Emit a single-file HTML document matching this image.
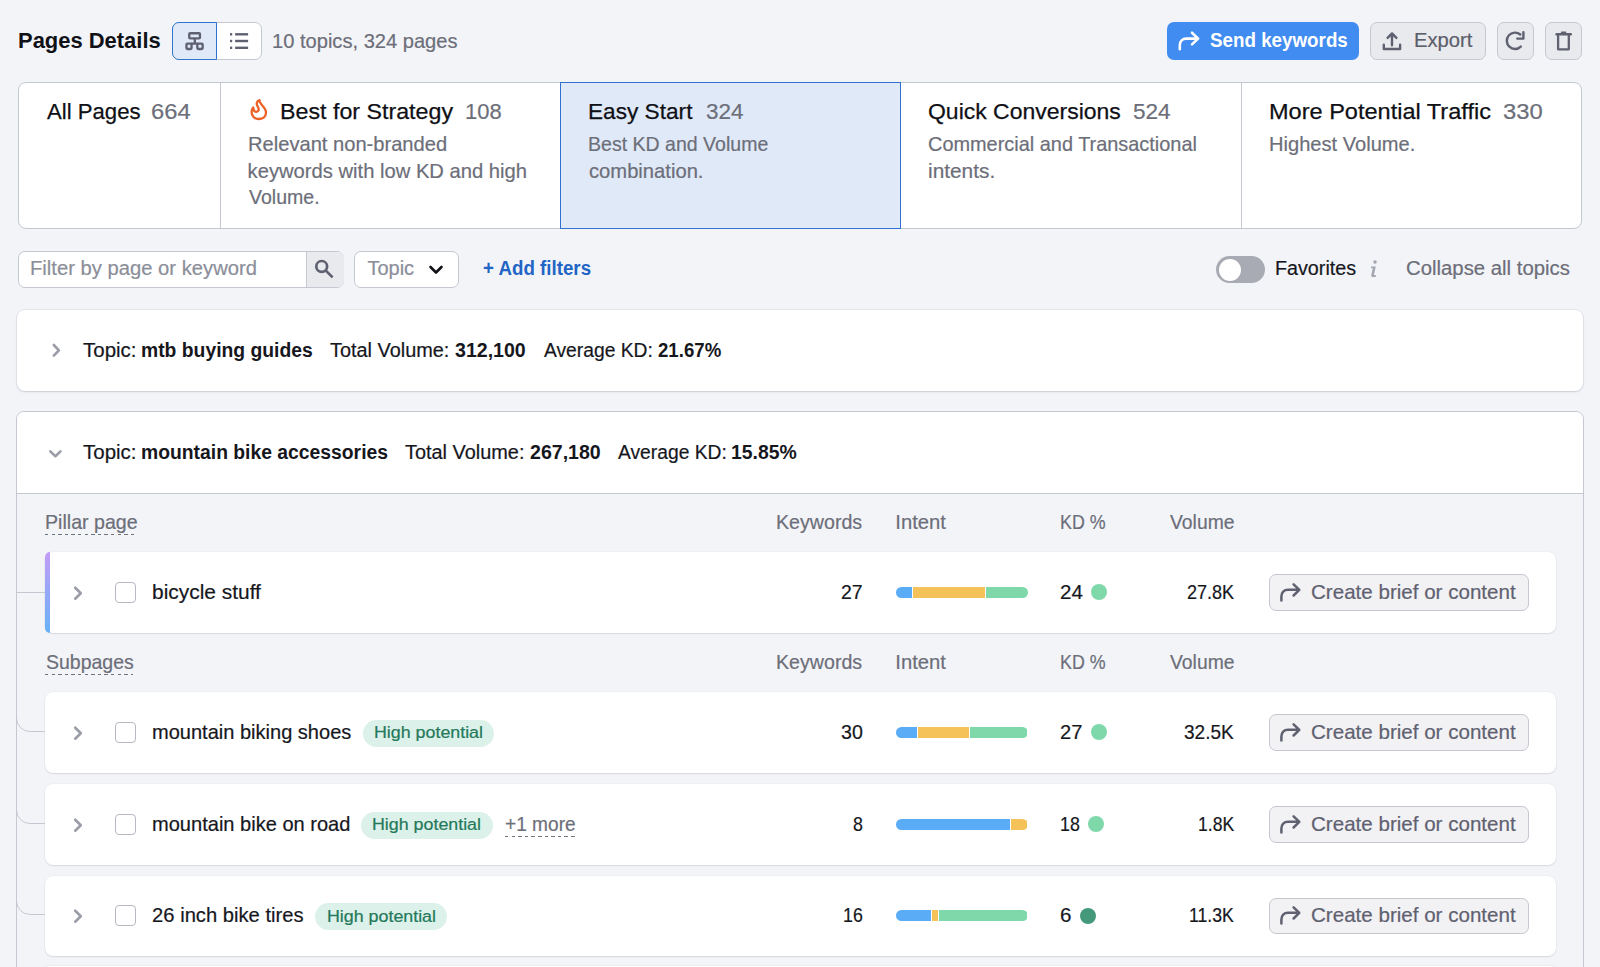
<!DOCTYPE html>
<html><head><meta charset="utf-8"><title>Pages Details</title>
<style>
html,body{margin:0;padding:0;}
body{width:1600px;height:967px;overflow:hidden;position:relative;background:#f3f4f8;font-family:"Liberation Sans",sans-serif;}
.t{position:absolute;white-space:nowrap;line-height:1;transform-origin:0 0;-webkit-text-stroke:0.2px currentColor;}
.r{position:absolute;}
.s{position:absolute;overflow:visible;}
</style></head><body>
<div class="t" style="left:17.64px;top:28.90px;font-size:22.8px;font-weight:bold;color:#101117;-webkit-text-stroke:0;transform:scaleX(0.9626);">Pages Details</div>
<div class="r" style="left:172px;top:22px;width:90px;height:38px;box-sizing:border-box;border:1px solid #c5c8d0;border-radius:7px;background:#fff;"></div>
<div class="r" style="left:172px;top:22px;width:45px;height:38px;box-sizing:border-box;border:1.5px solid #2f73d3;border-radius:7px 0 0 7px;background:#e0e9f8;"></div>
<svg class="s" style="left:184px;top:31px;" width="21" height="20" viewBox="0 0 21 20"><g fill="none" stroke="#5f6170" stroke-width="2.35"><rect x="5.25" y="2.2" width="10.7" height="5.1" rx="0.9"/><rect x="2.45" y="12.55" width="5.1" height="5.4" rx="0.9"/><rect x="13.35" y="12.55" width="5.3" height="5.4" rx="0.9"/><path d="M10.8 7.5V12.2M7 12.55H14"/></g></svg>
<svg class="s" style="left:228px;top:31px;" width="22" height="20" viewBox="0 0 22 20"><g fill="#5f6170"><rect x="2" y="2.1" width="2.2" height="2.4"/><rect x="2" y="8.8" width="2.2" height="2.4"/><rect x="2" y="15.6" width="2.2" height="2.4"/><rect x="7.1" y="2.1" width="13" height="2.4"/><rect x="7.1" y="8.8" width="13" height="2.4"/><rect x="7.1" y="15.6" width="13" height="2.4"/></g></svg>
<div class="t" style="left:272.11px;top:30.62px;font-size:20.3px;font-weight:normal;color:#6c6e79;transform:scaleX(0.9912);">10 topics, 324 pages</div>
<div class="r" style="left:1166.5px;top:22px;width:192.5px;height:38px;border-radius:7px;background:#418cf0;"></div>
<svg class="s" style="left:1176px;top:30px;" width="26" height="22" viewBox="0 0 26 22"><path d="M3.8 19.3V15.3C3.8 11.2 6.5 8.6 10.5 8.6H22.1M16 2.7L22.1 8.6L16 14.4" fill="none" stroke="#fff" stroke-width="2.6" stroke-linecap="round" stroke-linejoin="round"/></svg>
<div class="t" style="left:1210.20px;top:30.56px;font-size:19.3px;font-weight:bold;color:#fff;-webkit-text-stroke:0;transform:scaleX(0.9743);">Send keywords</div>
<div class="r" style="left:1370px;top:22px;width:115.5px;height:38px;box-sizing:border-box;border:1px solid #c5c8d0;border-radius:7px;background:#e9eaee;"></div>
<svg class="s" style="left:1381px;top:31px;" width="22" height="21" viewBox="0 0 22 21"><g fill="none" stroke="#5f6170" stroke-width="2.4" stroke-linejoin="round" stroke-linecap="round"><path d="M2.8 13.8V18H19.1V13.8"/><path d="M11 14.3V2.6M6.6 6.9L11 2.4L15.4 6.9"/></g></svg>
<div class="t" style="left:1414.00px;top:29.90px;font-size:20.2px;font-weight:normal;color:#5c5f6b;">Export</div>
<div class="r" style="left:1496.5px;top:22px;width:37px;height:38px;box-sizing:border-box;border:1px solid #c5c8d0;border-radius:7px;background:#e9eaee;"></div>
<svg class="s" style="left:1503px;top:30px;" width="24" height="22" viewBox="0 0 24 22"><g fill="none" stroke="#5f6170" stroke-width="2.4" stroke-linecap="round" stroke-linejoin="round"><path d="M17.8 16.6A8.2 8.2 0 1 1 17.3 4.5"/><path d="M14.3 8.6H20.4V2.3"/></g></svg>
<div class="r" style="left:1545px;top:22px;width:37px;height:38px;box-sizing:border-box;border:1px solid #c5c8d0;border-radius:7px;background:#e9eaee;"></div>
<svg class="s" style="left:1553px;top:30px;" width="21" height="22" viewBox="0 0 21 22"><g fill="none" stroke="#5f6170" stroke-linecap="round" stroke-linejoin="round"><path d="M5.1 5V19.3H15.8V5" stroke-width="2.3"/><path d="M3.6 4.2H17.8" stroke-width="2.4"/><path d="M8.8 2.4H12.4" stroke-width="1.8"/></g></svg>
<div class="r" style="left:17.5px;top:81.5px;width:1564.5px;height:147px;box-sizing:border-box;border:1px solid #c5c8d0;border-radius:8px;background:#fff;"></div>
<div class="r" style="left:220px;top:82px;width:1px;height:146px;background:#c5c8d0;"></div>
<div class="r" style="left:1241px;top:82px;width:1px;height:146px;background:#c5c8d0;"></div>
<div class="r" style="left:560px;top:82px;width:341px;height:147px;box-sizing:border-box;border:1px solid #3271d0;background:#e0e9f7;"></div>
<div class="t" style="left:46.80px;top:100.40px;font-size:22.8px;font-weight:normal;color:#0f1015;transform:scaleX(0.9717);-webkit-text-stroke:0.25px #0f1015;">All Pages</div>
<div class="t" style="left:151.36px;top:100.40px;font-size:22.8px;font-weight:normal;color:#6c6e79;transform:scaleX(1.0413);">664</div>
<svg class="s" style="left:244px;top:95px;" width="30" height="30" viewBox="0 0 30 30"><path d="M15.5 5.2C15 9.5 22 11.5 22 17.5C22 21.5 18.8 24 14.6 24C10.5 24 7.6 21 7.6 17C7.6 15 8.2 13.5 9.2 12.5C9.4 15 10.5 16.8 12.3 16.8C14 16.8 14.9 15.4 14.6 13.8C14.2 11.5 12.3 10.5 12.8 8C13.1 6.6 14 5.6 15.5 5.2Z" fill="none" stroke="#ec6126" stroke-width="2.3" stroke-linejoin="round"/></svg>
<div class="t" style="left:280.08px;top:100.40px;font-size:22.8px;font-weight:normal;color:#0f1015;transform:scaleX(1.0190);-webkit-text-stroke:0.25px #0f1015;">Best for Strategy</div>
<div class="t" style="left:465.04px;top:100.40px;font-size:22.8px;font-weight:normal;color:#6c6e79;transform:scaleX(0.9627);">108</div>
<div class="t" style="left:588.01px;top:100.40px;font-size:22.8px;font-weight:normal;color:#0f1015;transform:scaleX(0.9931);-webkit-text-stroke:0.25px #0f1015;">Easy Start</div>
<div class="t" style="left:706.00px;top:100.40px;font-size:22.8px;font-weight:normal;color:#6c6e79;transform:scaleX(0.9842);">324</div>
<div class="t" style="left:928.09px;top:100.40px;font-size:22.8px;font-weight:normal;color:#0f1015;transform:scaleX(1.0078);-webkit-text-stroke:0.25px #0f1015;">Quick Conversions</div>
<div class="t" style="left:1133.00px;top:100.40px;font-size:22.8px;font-weight:normal;color:#6c6e79;transform:scaleX(0.9907);">524</div>
<div class="t" style="left:1268.67px;top:100.40px;font-size:22.8px;font-weight:normal;color:#0f1015;transform:scaleX(1.0323);-webkit-text-stroke:0.25px #0f1015;">More Potential Traffic</div>
<div class="t" style="left:1503.00px;top:100.40px;font-size:22.8px;font-weight:normal;color:#6c6e79;transform:scaleX(1.0440);">330</div>
<div class="t" style="left:247.60px;top:133.60px;font-size:20.2px;font-weight:normal;color:#6c6e79;transform:scaleX(0.9967);">Relevant non-branded</div>
<div class="t" style="left:247.60px;top:160.50px;font-size:20.2px;font-weight:normal;color:#6c6e79;">keywords with low KD and high</div>
<div class="t" style="left:248.60px;top:187.40px;font-size:20.2px;font-weight:normal;color:#6c6e79;transform:scaleX(0.9673);">Volume.</div>
<div class="t" style="left:588.03px;top:133.60px;font-size:20.2px;font-weight:normal;color:#6c6e79;transform:scaleX(0.9678);">Best KD and Volume</div>
<div class="t" style="left:589.00px;top:160.50px;font-size:20.2px;font-weight:normal;color:#6c6e79;">combination.</div>
<div class="t" style="left:928.11px;top:133.60px;font-size:20.2px;font-weight:normal;color:#6c6e79;transform:scaleX(0.9863);">Commercial and Transactional</div>
<div class="t" style="left:928.07px;top:160.50px;font-size:20.2px;font-weight:normal;color:#6c6e79;transform:scaleX(1.0324);">intents.</div>
<div class="t" style="left:1268.70px;top:133.60px;font-size:20.2px;font-weight:normal;color:#6c6e79;transform:scaleX(0.9952);">Highest Volume.</div>
<div class="r" style="left:17.5px;top:251px;width:326px;height:37px;box-sizing:border-box;border:1px solid #c5c8d0;border-radius:7px;background:#fff;overflow:hidden;"></div>
<div class="r" style="left:305.5px;top:252px;width:37px;height:35px;border-left:1px solid #c5c8d0;background:#e9eaee;border-radius:0 6px 6px 0;"></div>
<div class="t" style="left:29.59px;top:258.37px;font-size:20px;font-weight:normal;color:#8b8e99;transform:scaleX(1.0107);">Filter by page or keyword</div>
<svg class="s" style="left:313px;top:258px;" width="24" height="22" viewBox="0 0 24 22"><g fill="none" stroke="#5f6170" stroke-width="2.7"><circle cx="8.7" cy="8.4" r="5.4"/><path d="M12.6 12.4L19.6 19.4"/></g></svg>
<div class="r" style="left:354px;top:251px;width:104.5px;height:37px;box-sizing:border-box;border:1px solid #c5c8d0;border-radius:7px;background:#fff;"></div>
<div class="t" style="left:367.40px;top:258.37px;font-size:20px;font-weight:normal;color:#8b8e99;">Topic</div>
<svg class="s" style="left:427px;top:263px;" width="18" height="14" viewBox="0 0 18 14"><path d="M3.5 4L9 9.5L14.5 4" fill="none" stroke="#101117" stroke-width="2.6" stroke-linecap="round" stroke-linejoin="round"/></svg>
<div class="t" style="left:483.40px;top:258.79px;font-size:19.5px;font-weight:bold;color:#2265c5;-webkit-text-stroke:0;transform:scaleX(0.9604);">+ Add filters</div>
<div class="r" style="left:1216px;top:256px;width:49px;height:27px;border-radius:14px;background:#a8aab4;"></div>
<div class="r" style="left:1218.5px;top:258.5px;width:22px;height:22px;border-radius:50%;background:#fff;"></div>
<div class="t" style="left:1275.01px;top:258.37px;font-size:20px;font-weight:normal;color:#16171d;transform:scaleX(0.9859);">Favorites</div>
<svg class="s" style="left:1366px;top:258px;" width="14" height="21" viewBox="0 0 14 21"><g fill="#a3a6b0"><circle cx="9" cy="4" r="1.8"/><path d="M5 8.5H9.8L8 16.2C7.8 17 8.2 17.3 9 17.2L10.2 17L9.9 18.7C9 19 8 19.1 7 19.1C5.6 19.1 5 18.2 5.3 17L6.8 10.3H5.2Z"/></g></svg>
<div class="t" style="left:1406.08px;top:258.37px;font-size:20px;font-weight:normal;color:#6c6e79;transform:scaleX(1.0169);">Collapse all topics</div>
<div class="r" style="left:17px;top:310px;width:1565.5px;height:80.5px;border-radius:8px;background:#fff;box-shadow:0 0 0 1px rgba(60,65,85,0.07),0 1px 2px rgba(60,65,85,0.16);"></div>
<svg class="s" style="left:48px;top:340px;" width="16" height="20" viewBox="0 0 16 20"><path d="M5.8 5L10.9 10.3L5.8 15.6" fill="none" stroke="#9a9ca7" stroke-width="2.6" stroke-linecap="round" stroke-linejoin="round"/></svg>
<div class="t" style="left:83.10px;top:339.97px;font-size:20px;font-weight:normal;color:#16171d;transform:scaleX(1.0239);">Topic:</div>
<div class="t" style="left:140.73px;top:339.97px;font-size:20px;font-weight:bold;color:#16171d;-webkit-text-stroke:0;transform:scaleX(0.9663);">mtb buying guides</div>
<div class="t" style="left:330.25px;top:339.97px;font-size:20px;font-weight:normal;color:#16171d;transform:scaleX(0.9944);">Total Volume:</div>
<div class="t" style="left:455.30px;top:339.97px;font-size:20px;font-weight:bold;color:#16171d;-webkit-text-stroke:0;transform:scaleX(0.9782);">312,100</div>
<div class="t" style="left:544.00px;top:339.97px;font-size:20px;font-weight:normal;color:#16171d;transform:scaleX(0.9626);">Average KD:</div>
<div class="t" style="left:658.10px;top:339.97px;font-size:20px;font-weight:bold;color:#16171d;-webkit-text-stroke:0;transform:scaleX(0.9317);">21.67%</div>
<div class="r" style="left:16px;top:411px;width:1568px;height:600px;box-sizing:border-box;border:1px solid #c5c8d0;border-radius:8px;background:#f3f4f8;overflow:hidden;"></div>
<div class="r" style="left:17px;top:412px;width:1566px;height:81px;background:#fff;border-bottom:1px solid #c5c8d0;border-radius:7px 7px 0 0;"></div>
<svg class="s" style="left:46px;top:444px;" width="18" height="16" viewBox="0 0 18 16"><path d="M4.3 7.4L9.4 12.2L14.5 7.4" fill="none" stroke="#9a9ca7" stroke-width="2.6" stroke-linecap="round" stroke-linejoin="round"/></svg>
<div class="t" style="left:83.10px;top:442.07px;font-size:20px;font-weight:normal;color:#16171d;transform:scaleX(1.0239);">Topic:</div>
<div class="t" style="left:140.63px;top:442.07px;font-size:20px;font-weight:bold;color:#16171d;-webkit-text-stroke:0;transform:scaleX(0.9661);">mountain bike accessories</div>
<div class="t" style="left:404.60px;top:442.07px;font-size:20px;font-weight:normal;color:#16171d;transform:scaleX(0.9948);">Total Volume:</div>
<div class="t" style="left:530.00px;top:442.07px;font-size:20px;font-weight:bold;color:#16171d;-webkit-text-stroke:0;transform:scaleX(0.9782);">267,180</div>
<div class="t" style="left:617.80px;top:442.07px;font-size:20px;font-weight:normal;color:#16171d;transform:scaleX(0.9626);">Average KD:</div>
<div class="t" style="left:731.23px;top:442.07px;font-size:20px;font-weight:bold;color:#16171d;-webkit-text-stroke:0;transform:scaleX(0.9694);">15.85%</div>
<div class="t" style="left:44.53px;top:512.10px;font-size:20.2px;font-weight:normal;color:#6c6e79;transform:scaleX(0.9707);">Pillar page</div>
<div class="r" style="left:44.7px;top:534.2px;width:92.2px;height:1.1px;background:repeating-linear-gradient(90deg,#70737e 0 3.5px,transparent 3.5px 6.6px);"></div>
<div class="t" style="left:776.43px;top:512.10px;font-size:20.2px;font-weight:normal;color:#6c6e79;transform:scaleX(0.9721);">Keywords</div>
<div class="t" style="left:895.30px;top:512.10px;font-size:20.2px;font-weight:normal;color:#6c6e79;">Intent</div>
<div class="t" style="left:1059.92px;top:512.10px;font-size:20.2px;font-weight:normal;color:#6c6e79;transform:scaleX(0.8825);">KD %</div>
<div class="t" style="left:1170.40px;top:512.10px;font-size:20.2px;font-weight:normal;color:#6c6e79;transform:scaleX(0.9582);">Volume</div>
<div class="t" style="left:45.50px;top:651.90px;font-size:20.2px;font-weight:normal;color:#6c6e79;transform:scaleX(0.9645);">Subpages</div>
<div class="r" style="left:44.7px;top:674px;width:88.39999999999999px;height:1.1px;background:repeating-linear-gradient(90deg,#70737e 0 3.5px,transparent 3.5px 6.6px);"></div>
<div class="t" style="left:776.43px;top:651.90px;font-size:20.2px;font-weight:normal;color:#6c6e79;transform:scaleX(0.9721);">Keywords</div>
<div class="t" style="left:895.30px;top:651.90px;font-size:20.2px;font-weight:normal;color:#6c6e79;">Intent</div>
<div class="t" style="left:1059.92px;top:651.90px;font-size:20.2px;font-weight:normal;color:#6c6e79;transform:scaleX(0.8825);">KD %</div>
<div class="t" style="left:1170.40px;top:651.90px;font-size:20.2px;font-weight:normal;color:#6c6e79;transform:scaleX(0.9582);">Volume</div>
<div class="r" style="left:44.5px;top:552px;width:1511px;height:80.5px;border-radius:8px;background:#fff;box-shadow:0 0 0 0.5px rgba(60,65,85,0.06),0 1px 1.5px rgba(60,65,85,0.13);"></div>
<div class="r" style="left:44.5px;top:552px;width:5.5px;height:80.5px;border-radius:8px 0 0 8px;background:linear-gradient(#c39cf6,#66b2f8);"></div>
<div class="r" style="left:17px;top:592.45px;width:27.5px;height:1px;background:#c5c8d0;"></div>
<svg class="s" style="left:70px;top:582.75px;" width="16" height="20" viewBox="0 0 16 20"><path d="M5.2 4.7L10.8 10.2L5.2 15.7" fill="none" stroke="#9a9ca7" stroke-width="2.6" stroke-linecap="round" stroke-linejoin="round"/></svg>
<div class="r" style="left:114.5px;top:581.75px;width:21px;height:21px;box-sizing:border-box;border:1px solid #b6b9c2;border-radius:4px;background:#fff;"></div>
<div class="t" style="left:152.06px;top:581.70px;font-size:20.2px;font-weight:normal;color:#16171d;transform:scaleX(1.0365);">bicycle stuff</div>
<div class="t" style="left:841.14px;top:581.70px;font-size:20.2px;font-weight:normal;color:#16171d;transform:scaleX(0.9610);">27</div>
<div class="r" style="left:895.5px;top:586.75px;width:132px;height:11px;border-radius:6px;overflow:hidden;display:flex;gap:1px;background:#fff"><div style="width:16.5px;flex:none;background:#5aacf6"></div><div style="width:71.5px;flex:none;background:#f5c25a"></div><div style="width:42px;flex:none;background:#7fd8a9"></div></div>
<div class="t" style="left:1059.58px;top:581.70px;font-size:20.2px;font-weight:normal;color:#16171d;transform:scaleX(1.0176);">24</div>
<div class="r" style="left:1091.2px;top:584.15px;width:16.2px;height:16.2px;border-radius:50%;background:#7fd8a9;"></div>
<div class="t" style="left:1186.91px;top:581.70px;font-size:20.2px;font-weight:normal;color:#16171d;transform:scaleX(0.8931);">27.8K</div>
<div class="r" style="left:1268.5px;top:574.25px;width:260px;height:36.5px;box-sizing:border-box;border:1px solid #c5c8d0;border-radius:7px;background:#f2f2f5;"></div>
<svg class="s" style="left:1278px;top:581.75px;" width="25" height="21" viewBox="0 0 25 21"><path d="M3.4 18.6V14.5C3.4 10.5 6 7.85 10 7.85H21.2M15.6 2.3L21.3 7.9L15.6 13.5" fill="none" stroke="#5f6170" stroke-width="2.5" stroke-linecap="round" stroke-linejoin="round"/></svg>
<div class="t" style="left:1310.99px;top:581.62px;font-size:20.3px;font-weight:normal;color:#5f6170;transform:scaleX(1.0141);">Create brief or content</div>
<div class="r" style="left:44.5px;top:692px;width:1511px;height:80.5px;border-radius:8px;background:#fff;box-shadow:0 0 0 0.5px rgba(60,65,85,0.06),0 1px 1.5px rgba(60,65,85,0.13);"></div>
<svg class="s" style="left:16px;top:716px;" width="29" height="18" viewBox="0 0 29 18"><path d="M0.5 0V2A13.5 13.5 0 0 0 14 15.5H29" fill="none" stroke="#c5c8d0" stroke-width="1"/></svg>
<svg class="s" style="left:70px;top:722.75px;" width="16" height="20" viewBox="0 0 16 20"><path d="M5.2 4.7L10.8 10.2L5.2 15.7" fill="none" stroke="#9a9ca7" stroke-width="2.6" stroke-linecap="round" stroke-linejoin="round"/></svg>
<div class="r" style="left:114.5px;top:721.75px;width:21px;height:21px;box-sizing:border-box;border:1px solid #b6b9c2;border-radius:4px;background:#fff;"></div>
<div class="t" style="left:152.11px;top:721.70px;font-size:20.2px;font-weight:normal;color:#16171d;transform:scaleX(0.9921);">mountain biking shoes</div>
<div class="r" style="left:362.8px;top:719.75px;width:131.7px;height:27px;border-radius:14px;background:#dcf1ea;"></div>
<div class="t" style="left:374.37px;top:724.11px;font-size:17.3px;font-weight:normal;color:#24795a;transform:scaleX(1.0314);-webkit-text-stroke:0.22px #24795a;">High potential</div>
<div class="t" style="left:840.90px;top:721.70px;font-size:20.2px;font-weight:normal;color:#16171d;transform:scaleX(0.9718);">30</div>
<div class="r" style="left:895.5px;top:726.75px;width:132px;height:11px;border-radius:6px;overflow:hidden;display:flex;gap:1px;background:#fff"><div style="width:21.8px;flex:none;background:#5aacf6"></div><div style="width:51px;flex:none;background:#f5c25a"></div><div style="width:57.2px;flex:none;background:#7fd8a9"></div></div>
<div class="t" style="left:1059.61px;top:721.70px;font-size:20.2px;font-weight:normal;color:#16171d;transform:scaleX(0.9940);">27</div>
<div class="r" style="left:1090.7px;top:724.15px;width:16.2px;height:16.2px;border-radius:50%;background:#7fd8a9;"></div>
<div class="t" style="left:1184.25px;top:721.70px;font-size:20.2px;font-weight:normal;color:#16171d;transform:scaleX(0.9429);">32.5K</div>
<div class="r" style="left:1268.5px;top:714.25px;width:260px;height:36.5px;box-sizing:border-box;border:1px solid #c5c8d0;border-radius:7px;background:#f2f2f5;"></div>
<svg class="s" style="left:1278px;top:721.75px;" width="25" height="21" viewBox="0 0 25 21"><path d="M3.4 18.6V14.5C3.4 10.5 6 7.85 10 7.85H21.2M15.6 2.3L21.3 7.9L15.6 13.5" fill="none" stroke="#5f6170" stroke-width="2.5" stroke-linecap="round" stroke-linejoin="round"/></svg>
<div class="t" style="left:1310.99px;top:721.62px;font-size:20.3px;font-weight:normal;color:#5f6170;transform:scaleX(1.0141);">Create brief or content</div>
<div class="r" style="left:44.5px;top:784px;width:1511px;height:80.5px;border-radius:8px;background:#fff;box-shadow:0 0 0 0.5px rgba(60,65,85,0.06),0 1px 1.5px rgba(60,65,85,0.13);"></div>
<svg class="s" style="left:16px;top:808px;" width="29" height="18" viewBox="0 0 29 18"><path d="M0.5 0V2A13.5 13.5 0 0 0 14 15.5H29" fill="none" stroke="#c5c8d0" stroke-width="1"/></svg>
<svg class="s" style="left:70px;top:814.75px;" width="16" height="20" viewBox="0 0 16 20"><path d="M5.2 4.7L10.8 10.2L5.2 15.7" fill="none" stroke="#9a9ca7" stroke-width="2.6" stroke-linecap="round" stroke-linejoin="round"/></svg>
<div class="r" style="left:114.5px;top:813.75px;width:21px;height:21px;box-sizing:border-box;border:1px solid #b6b9c2;border-radius:4px;background:#fff;"></div>
<div class="t" style="left:152.11px;top:813.70px;font-size:20.2px;font-weight:normal;color:#16171d;transform:scaleX(0.9932);">mountain bike on road</div>
<div class="r" style="left:360.8px;top:811.75px;width:132.2px;height:27px;border-radius:14px;background:#dcf1ea;"></div>
<div class="t" style="left:372.37px;top:816.11px;font-size:17.3px;font-weight:normal;color:#24795a;transform:scaleX(1.0314);-webkit-text-stroke:0.22px #24795a;">High potential</div>
<div class="t" style="left:505.20px;top:813.70px;font-size:20.2px;font-weight:normal;color:#6c6e79;transform:scaleX(0.9463);">+1 more</div>
<div class="r" style="left:505px;top:835.8px;width:70.6px;height:1.1px;background:repeating-linear-gradient(90deg,#70737e 0 3.5px,transparent 3.5px 6.6px);"></div>
<div class="t" style="left:852.80px;top:813.70px;font-size:20.2px;font-weight:normal;color:#16171d;transform:scaleX(0.8818);">8</div>
<div class="r" style="left:895.5px;top:818.75px;width:132px;height:11px;border-radius:6px;overflow:hidden;display:flex;gap:1px;background:#fff"><div style="width:114.9px;flex:none;background:#5aacf6"></div><div style="width:16.1px;flex:none;background:#f5c25a"></div></div>
<div class="t" style="left:1059.72px;top:813.70px;font-size:20.2px;font-weight:normal;color:#16171d;transform:scaleX(0.8809);">18</div>
<div class="r" style="left:1088.3px;top:816.15px;width:16.2px;height:16.2px;border-radius:50%;background:#7fd8a9;"></div>
<div class="t" style="left:1197.93px;top:813.70px;font-size:20.2px;font-weight:normal;color:#16171d;transform:scaleX(0.8694);">1.8K</div>
<div class="r" style="left:1268.5px;top:806.25px;width:260px;height:36.5px;box-sizing:border-box;border:1px solid #c5c8d0;border-radius:7px;background:#f2f2f5;"></div>
<svg class="s" style="left:1278px;top:813.75px;" width="25" height="21" viewBox="0 0 25 21"><path d="M3.4 18.6V14.5C3.4 10.5 6 7.85 10 7.85H21.2M15.6 2.3L21.3 7.9L15.6 13.5" fill="none" stroke="#5f6170" stroke-width="2.5" stroke-linecap="round" stroke-linejoin="round"/></svg>
<div class="t" style="left:1310.99px;top:813.62px;font-size:20.3px;font-weight:normal;color:#5f6170;transform:scaleX(1.0141);">Create brief or content</div>
<div class="r" style="left:44.5px;top:875.5px;width:1511px;height:80.5px;border-radius:8px;background:#fff;box-shadow:0 0 0 0.5px rgba(60,65,85,0.06),0 1px 1.5px rgba(60,65,85,0.13);"></div>
<svg class="s" style="left:16px;top:899px;" width="29" height="18" viewBox="0 0 29 18"><path d="M0.5 0V2A13.5 13.5 0 0 0 14 15.5H29" fill="none" stroke="#c5c8d0" stroke-width="1"/></svg>
<svg class="s" style="left:70px;top:906.25px;" width="16" height="20" viewBox="0 0 16 20"><path d="M5.2 4.7L10.8 10.2L5.2 15.7" fill="none" stroke="#9a9ca7" stroke-width="2.6" stroke-linecap="round" stroke-linejoin="round"/></svg>
<div class="r" style="left:114.5px;top:905.25px;width:21px;height:21px;box-sizing:border-box;border:1px solid #b6b9c2;border-radius:4px;background:#fff;"></div>
<div class="t" style="left:152.10px;top:905.20px;font-size:20.2px;font-weight:normal;color:#16171d;">26 inch bike tires</div>
<div class="r" style="left:315px;top:903.25px;width:132.25px;height:27px;border-radius:14px;background:#dcf1ea;"></div>
<div class="t" style="left:326.57px;top:907.61px;font-size:17.3px;font-weight:normal;color:#24795a;transform:scaleX(1.0314);-webkit-text-stroke:0.22px #24795a;">High potential</div>
<div class="t" style="left:842.92px;top:905.20px;font-size:20.2px;font-weight:normal;color:#16171d;transform:scaleX(0.8809);">16</div>
<div class="r" style="left:895.5px;top:910.25px;width:132px;height:11px;border-radius:6px;overflow:hidden;display:flex;gap:1px;background:#fff"><div style="width:35.6px;flex:none;background:#5aacf6"></div><div style="width:6.4px;flex:none;background:#f5c25a"></div><div style="width:88px;flex:none;background:#7fd8a9"></div></div>
<div class="t" style="left:1059.58px;top:905.20px;font-size:20.2px;font-weight:normal;color:#16171d;transform:scaleX(1.0200);">6</div>
<div class="r" style="left:1079.8px;top:907.65px;width:16.2px;height:16.2px;border-radius:50%;background:#45997b;"></div>
<div class="t" style="left:1189.23px;top:905.20px;font-size:20.2px;font-weight:normal;color:#16171d;transform:scaleX(0.8742);">11.3K</div>
<div class="r" style="left:1268.5px;top:897.75px;width:260px;height:36.5px;box-sizing:border-box;border:1px solid #c5c8d0;border-radius:7px;background:#f2f2f5;"></div>
<svg class="s" style="left:1278px;top:905.25px;" width="25" height="21" viewBox="0 0 25 21"><path d="M3.4 18.6V14.5C3.4 10.5 6 7.85 10 7.85H21.2M15.6 2.3L21.3 7.9L15.6 13.5" fill="none" stroke="#5f6170" stroke-width="2.5" stroke-linecap="round" stroke-linejoin="round"/></svg>
<div class="t" style="left:1310.99px;top:905.12px;font-size:20.3px;font-weight:normal;color:#5f6170;transform:scaleX(1.0141);">Create brief or content</div>
<div class="r" style="left:44px;top:966px;width:1511.5px;height:10px;border-radius:8px;background:#fff;box-shadow:0 0 1.5px rgba(60,65,85,0.2);"></div>
</body></html>
